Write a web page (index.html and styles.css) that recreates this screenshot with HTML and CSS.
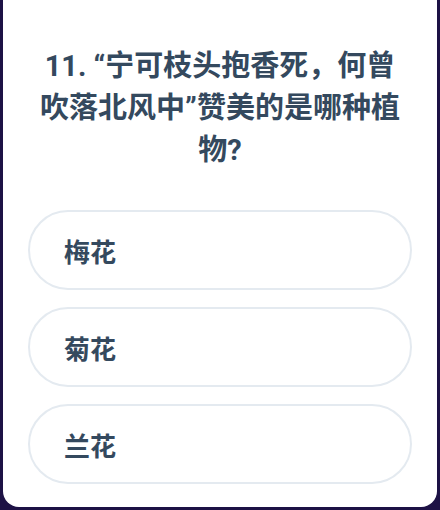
FILE: index.html
```html
<!DOCTYPE html>
<html lang="zh-CN">
<head>
<meta charset="utf-8">
<link rel="stylesheet" href="styles.css">
</head>
<body>
<div class="card">
  <h1 class="question">11. “宁可枝头抱香死，何曾吹落北风中”赞美的是哪种植物?</h1>
  <div class="options">
    <div class="option">梅花</div>
    <div class="option">菊花</div>
    <div class="option">兰花</div>
  </div>
</div>
</body>
</html>
```

FILE: styles.css
```css
html, body {
  margin: 0;
  padding: 0;
}
body {
  width: 440px;
  height: 510px;
  background: #1d1245;
  font-family: Roboto, "Noto Sans CJK SC", sans-serif;
  color: #34495e;
  overflow: hidden;
}
.card {
  margin: 0 3px;
  height: 507px;
  box-sizing: border-box;
  background: #ffffff;
  border-radius: 0 0 16px 16px;
  padding: 45px 25px 0;
}
.question {
  margin: 0 8px;
  font-size: 29px;
  line-height: 42px;
  font-weight: 700;
  text-align: center;
}
.options {
  margin-top: 39px;
  display: flex;
  flex-direction: column;
  gap: 17px;
}
.option {
  height: 80px;
  box-sizing: border-box;
  border: 2px solid #e4eaf0;
  border-radius: 40px;
  display: flex;
  align-items: center;
  padding-left: 34px;
  font-size: 26px;
  font-weight: 700;
}
```
